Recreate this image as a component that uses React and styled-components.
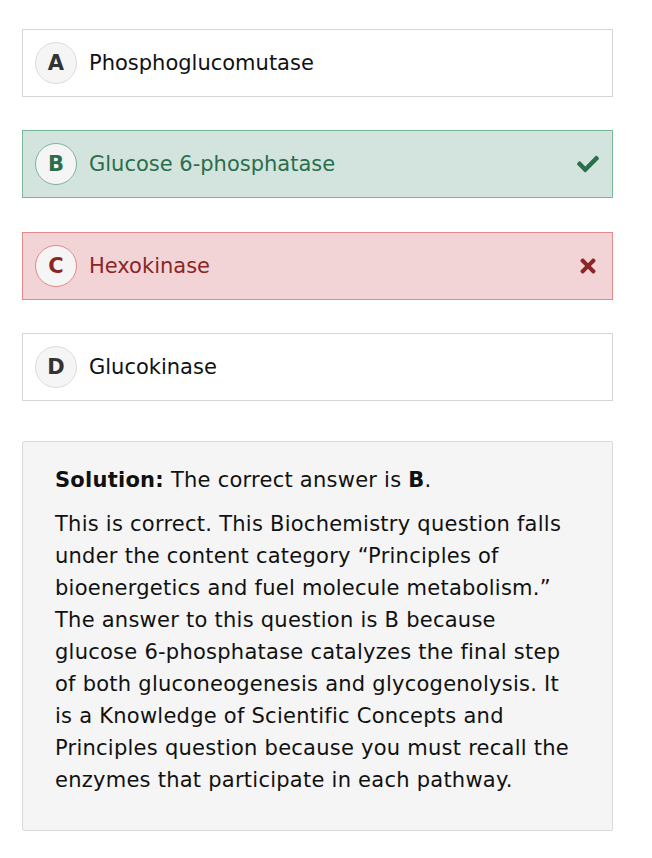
import React from "react";
import styled, { createGlobalStyle } from "styled-components";
import { FaCheck, FaTimes } from "react-icons/fa";

const Global = createGlobalStyle`
  html, body { margin: 0; padding: 0; background: #fff; }
  body { font-family: Verdana, "DejaVu Sans", sans-serif; color: #111; }
`;

const Page = styled.div`
  padding: 29px 40px 20px 22px;
  width: 591px;
  display: flex;
  flex-direction: column;
  gap: 33.4px;
`;

const variants = {
  neutral: { bg: "#fff", border: "#d6d6d6", text: "#111", circleBorder: "#dcdcdc", letter: "#333" },
  correct: { bg: "#d2e4dd", border: "#7bb79b", text: "#2b6e4b", circleBorder: "#7bb79b", letter: "#2b6e4b" },
  wrong: { bg: "#f2d4d6", border: "#e08a8c", text: "#8a2626", circleBorder: "#e08a8c", letter: "#8a2626" },
};

const Option = styled.div`
  box-sizing: border-box;
  height: 68px;
  display: flex;
  align-items: center;
  padding: 0 13px 0 12px;
  gap: 12px;
  background: ${(p) => variants[p.$v].bg};
  border: 1px solid ${(p) => variants[p.$v].border};
  color: ${(p) => variants[p.$v].text};
`;

const Letter = styled.span`
  box-sizing: border-box;
  width: 42px;
  height: 42px;
  border-radius: 50%;
  background: #f5f5f5;
  border: 1px solid ${(p) => variants[p.$v].circleBorder};
  color: ${(p) => variants[p.$v].letter};
  display: flex;
  align-items: center;
  justify-content: center;
  font-weight: bold;
  font-size: 21px;
  flex: none;
`;

const Label = styled.span`
  font-size: 21px;
  flex: 1;
`;

const Mark = styled.span`
  display: flex;
  align-items: center;
  font-size: 22px;
  color: ${(p) => variants[p.$v].text};
`;

const Solution = styled.div`
  box-sizing: border-box;
  margin-top: 6px;
  background: #f5f5f5;
  border: 1px solid #dadada;
  border-radius: 2px;
  padding: 22px 30px 34px 32px;
  font-size: 21px;
  letter-spacing: 0.25px;
  line-height: 32px;
  color: #111;
`;

const P = styled.p`
  margin: 0 0 12px 0;
  &:last-child { margin: 0; }
`;

const options = [
  { l: "A", t: "Phosphoglucomutase", v: "neutral" },
  { l: "B", t: "Glucose 6-phosphatase", v: "correct" },
  { l: "C", t: "Hexokinase", v: "wrong" },
  { l: "D", t: "Glucokinase", v: "neutral" },
];

export default function App() {
  return (
    <>
      <Global />
      <Page>
        {options.map((o) => (
          <Option key={o.l} $v={o.v}>
            <Letter $v={o.v}>{o.l}</Letter>
            <Label>{o.t}</Label>
            {o.v === "correct" && (
              <Mark $v={o.v}><FaCheck /></Mark>
            )}
            {o.v === "wrong" && (
              <Mark $v={o.v}><FaTimes /></Mark>
            )}
          </Option>
        ))}
        <Solution>
          <P>
            <b>Solution:</b> The correct answer is <b>B</b>.
          </P>
          <P>
            This is correct. This Biochemistry question falls under the content category “Principles of bioenergetics and fuel molecule metabolism.” The answer to this question is B because glucose 6-phosphatase catalyzes the final step of both gluconeogenesis and glycogenolysis. It is a Knowledge of Scientific Concepts and Principles question because you must recall the enzymes that participate in each pathway.
          </P>
        </Solution>
      </Page>
    </>
  );
}
